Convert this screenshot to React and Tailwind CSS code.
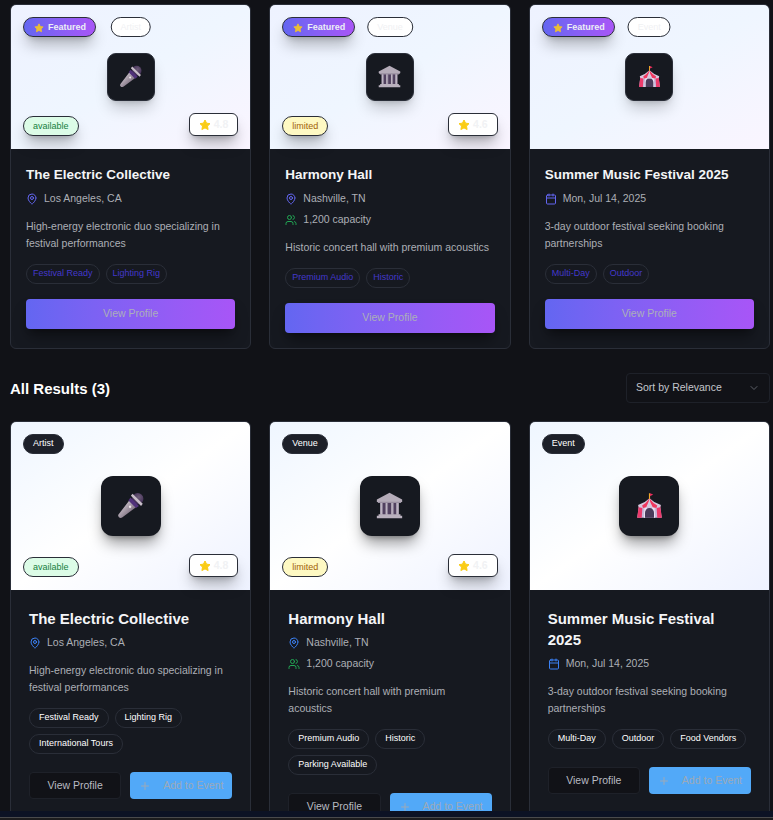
import React from "react";
import { MapPin, Users, Calendar, ChevronDown, Plus } from "lucide-react";

const items = [
  {
    type: "Artist",
    name: "The Electric Collective",
    place: "Los Angeles, CA",
    about: "High-energy electronic duo specializing in festival performances",
    tags: ["Festival Ready", "Lighting Rig", "International Tours"],
    status: "available",
    rating: "4.8",
    Art: Microphone,
  },
  {
    type: "Venue",
    name: "Harmony Hall",
    place: "Nashville, TN",
    capacity: "1,200 capacity",
    about: "Historic concert hall with premium acoustics",
    tags: ["Premium Audio", "Historic", "Parking Available"],
    status: "limited",
    rating: "4.6",
    Art: Building,
  },
  {
    type: "Event",
    name: "Summer Music Festival 2025",
    date: "Mon, Jul 14, 2025",
    about: "3-day outdoor festival seeking booking partnerships",
    tags: ["Multi-Day", "Outdoor", "Food Vendors"],
    Art: Tent,
  },
];

function Microphone({ className }) {
  return (
    <svg viewBox="0 0 32 32" className={className}>
      <defs>
        <linearGradient id="micBody" x1="8" y1="14" x2="18" y2="24" gradientUnits="userSpaceOnUse">
          <stop stopColor="#c9bfc8" />
          <stop offset="1" stopColor="#7d7080" />
        </linearGradient>
        <radialGradient id="micHead" cx="0.6" cy="0.35" r="0.7">
          <stop stopColor="#6e5d79" />
          <stop offset="1" stopColor="#33204a" />
        </radialGradient>
      </defs>
      <circle cx="24.500" cy="8" r="6.800" fill="url(#micHead)" />
      <path d="M14.500 10 22.500 18 6.500 30Q4 31.500 2.300 29.800T2 26.500Z" fill="url(#micBody)" />
      <path d="M16 6.500 26 16.500 22.500 19 13.500 10Z" fill="#50317a" />
      <path d="M18.400 2.200 30.500 14 28.500 16.500 16.500 4.500Z" fill="#c8bec9" />
      <circle cx="15.500" cy="17.500" r="1.400" fill="#f1e9ee" />
    </svg>
  );
}

function Building({ className }) {
  return (
    <svg viewBox="0 0 32 32" className={className}>
      <path d="M5 11h22v16H5z" fill="#51415f" />
      <path d="M16 1 31 9v2l-2 2H3l-2-2V9z" fill="#b5acb9" />
      <path d="M3 11.500h26v1.500H3z" fill="#9a8fa1" />
      <path d="M5 13h3v14H5zM11.300 13h2.700v14h-2.700zM18 13h2.700v14H18zM24 13h3v14h-3z" fill="#bdb4c2" />
      <path d="M7.300 13h1v14h-1zM13.300 13h1v14h-1zM20 13h1v14h-1z" fill="#85788f" />
      <path d="M3 26.500h26V28h2v3H1v-3h2z" fill="#bab1be" />
    </svg>
  );
}

function Tent({ className }) {
  return (
    <svg viewBox="-0.500 0 33 32" className={className}>
      <path d="M3 16h26l2 15H1z" fill="#c9b9db" />
      <path d="M3 16h4.500L6.500 31H1zM24.500 16H29l2 15h-5.500z" fill="#ed3a6b" />
      <path d="M10 17h3l-1 6-1 8H9zM19 17h3l1 14h-2l-1-8z" fill="#eee3f3" />
      <path d="M10.500 31v-6a5.500 6 0 0 1 11 0v6z" fill="#4a3b5a" />
      <path d="M16 7Q10 13 2 15.500L3 18l4.500 1 4-1L16 19l4.500-1 4 1 4.500-1 1-2.500Q22 13 16 7Z" fill="#d5c9de" />
      <path d="M16 7Q12 13 7 16l1 3 4-1 3-7zM16 7l1 5 3 6 4.500 1 1-3Q20 13 16 7Z" fill="#f0385f" />
      <path d="M15.300 1h1.400v7h-1.400z" fill="#f0a62a" />
      <path d="m16.700 1 3.800 1.700-3.800 2z" fill="#ec2f5c" />
    </svg>
  );
}

function Star({ className }) {
  return (
    <svg viewBox="0 0 24 24" className={className} fill="currentColor" stroke="currentColor" strokeWidth="2" strokeLinejoin="round">
      <path d="m12 2 3.100 6.300 6.900 1-5 4.900 1.200 6.900L12 17.800l-6.200 3.300L7 14.200 2 9.300l6.900-1z" />
    </svg>
  );
}

function StatusBadge({ status, raised }) {
  const tone = status === "available" ? "bg-[#dcfce7] text-[#15803d]" : "bg-[#fef9c3] text-[#a16207]";
  const shadow = raised ? "shadow-lg shadow-black/30" : "";
  return (
    <span className={`absolute bottom-3 left-3 mb-px flex h-5 items-center rounded-full border border-[#2a2e38] px-[9px] pt-px text-[9px] ${tone} ${shadow}`}>
      {status}
    </span>
  );
}

function Rating({ value }) {
  return (
    <span className="absolute right-3 bottom-3 mb-px flex h-[23px] items-center gap-[3px] rounded-md border border-[#2a2e38] bg-white px-[9px] text-[10.5px] font-bold text-[#f1f2f4] shadow-lg shadow-black/30">
      <Star className="size-3 text-[#facc15]" />
      {value}
    </span>
  );
}

function Facts({ item, accent }) {
  return (
    <div className="flex flex-col gap-1.5 text-[10.5px] leading-[15px] text-[#acafb6]">
      {item.place && (
        <div className="flex items-center gap-1.5">
          <MapPin className={`size-3 ${accent}`} />
          <span>{item.place}</span>
        </div>
      )}
      {item.capacity && (
        <div className="flex items-center gap-1.5">
          <Users className="size-3 text-[#22a855]" />
          <span>{item.capacity}</span>
        </div>
      )}
      {item.date && (
        <div className="flex items-center gap-1.5">
          <Calendar className={`size-3 ${accent}`} />
          <span>{item.date}</span>
        </div>
      )}
    </div>
  );
}

function FeaturedCard({ item }) {
  const { Art } = item;
  return (
    <article className="overflow-hidden rounded-md border border-[#2a2e38] bg-[#161920]">
      <div className="relative flex h-36 items-center justify-center bg-linear-to-br from-[#eef2ff] via-[#eff6ff] to-[#faf5ff]">
        <span className="absolute top-3 left-3 flex h-5 items-center gap-[3px] rounded-full border border-[#2a2e38] bg-linear-to-r from-[#6366f1] to-[#a855f7] px-[9px] pt-px text-[9px] font-bold text-[#eceef5] shadow-lg shadow-black/30">
          <Star className="mr-px ml-px size-[10px] text-[#eabf35]" />
          Featured
        </span>
        <span className="absolute top-3 left-1/2 flex h-5 -translate-x-1/2 items-center rounded-full border border-[#2a2e38] bg-white px-[9px] pt-px text-[9px] text-[#f0f1f3]">
          {item.type}
        </span>
        <div className="flex size-12 items-center justify-center rounded-[9px] border border-[#2a2e38] bg-[#161920] shadow-lg shadow-black/20">
          <Art className="mb-0.5 size-[23px]" />
        </div>
        {item.status && <StatusBadge status={item.status} raised />}
        {item.rating && <Rating value={item.rating} />}
      </div>
      <div className="p-[15px]">
        <h3 className="mb-1.5 text-[13.5px] leading-[21px] font-bold text-[#f4f5f7]">{item.name}</h3>
        <Facts item={item} accent="text-[#6366f1]" />
        <p className="mt-3 text-[10.5px] leading-[17.06px] text-[#acafb6]">{item.about}</p>
        <div className="mt-3 flex flex-wrap gap-1.5">
          {item.tags.slice(0, 2).map((tag) => (
            <span key={tag} className="flex h-5 items-center rounded-full border border-[#2a2e38] px-1.5 text-[9px] text-[#4338ca]">
              {tag}
            </span>
          ))}
        </div>
        <button className="mt-[15px] flex h-[30px] w-full items-center justify-center rounded-[4px] bg-linear-to-r from-[#6366f1] to-[#a855f7] text-[10.5px] text-[#acafb9] shadow-lg shadow-black/40">
          View Profile
        </button>
      </div>
    </article>
  );
}

function ResultCard({ item }) {
  const { Art } = item;
  return (
    <article className="overflow-hidden rounded-md border border-[#2a2e38] bg-[#161920]">
      <div className="relative flex h-42 items-center justify-center bg-linear-to-br from-[#eff6ff] via-white to-[#eef2ff]">
        <span className="absolute top-3 left-3 flex h-5 items-center rounded-full border border-[#2a2e38] bg-[#1d2029] px-[9px] text-[9px] text-white">
          {item.type}
        </span>
        <div className="flex size-15 items-center justify-center rounded-xl bg-[#161920] shadow-lg shadow-black/40">
          <Art className="mb-0.5 size-[27px]" />
        </div>
        {item.status && <StatusBadge status={item.status} />}
        {item.rating && <Rating value={item.rating} />}
      </div>
      <div className="p-[18px]">
        <h3 className="mb-1.5 text-[15px] leading-[21px] font-bold text-[#f4f5f7]">{item.name}</h3>
        <Facts item={item} accent="text-[#3b82f6]" />
        <p className="mt-3 text-[10.5px] leading-[17.06px] text-[#acafb6]">{item.about}</p>
        <div className="mt-3 flex flex-wrap gap-1.5">
          {item.tags.map((tag) => (
            <span key={tag} className="flex h-5 items-center rounded-full border border-[#2a2e38] px-[9px] text-[9px] text-white">
              {tag}
            </span>
          ))}
        </div>
        <div className="mt-[18px] flex gap-[9px]">
          <button className="flex h-[27px] flex-1 items-center justify-center rounded-[4px] border border-[#1e2129] bg-[#111217] text-[10.5px] whitespace-nowrap text-[#b8bbc2]">
            View Profile
          </button>
          <button className="flex h-[27px] w-[102px] items-center justify-between rounded-[4px] bg-[#52a9f8] pr-[9px] pl-[9px] text-[10.5px] whitespace-nowrap text-[#9ca9b8]">
            <Plus className="size-3" />
            Add to Event
          </button>
        </div>
      </div>
    </article>
  );
}

export default function App() {
  return (
    <div className="flex h-[820px] w-[773px] flex-col overflow-hidden bg-[#111217] font-['Liberation_Sans',Arial,sans-serif]">
      <main className="h-[811px] overflow-hidden pt-1 pr-[3px] pl-[10px]">
        <section className="grid grid-cols-3 gap-[18px]">
          {items.map((item) => (
            <FeaturedCard key={item.name} item={item} />
          ))}
        </section>
        <header className="mt-6 mb-[18px] flex items-center justify-between">
          <h2 className="pt-0.5 text-[15px] font-bold text-white">All Results (3)</h2>
          <button className="flex h-[30px] w-36 items-center justify-between rounded-[4px] border border-[#1e2129] px-[9px] text-[10.5px] text-[#c4c6cc]">
            Sort by Relevance
            <ChevronDown className="size-3 text-[#5d6068]" />
          </button>
        </header>
        <section className="grid grid-cols-3 gap-[18px]">
          {items.map((item) => (
            <ResultCard key={item.name} item={item} />
          ))}
        </section>
      </main>
      <footer className="flex-1 bg-[#0c1224] pt-1.5">
        <div className="h-[3px] border-t border-[#4a4a4c] bg-[#1c1c1e]" />
      </footer>
    </div>
  );
}
